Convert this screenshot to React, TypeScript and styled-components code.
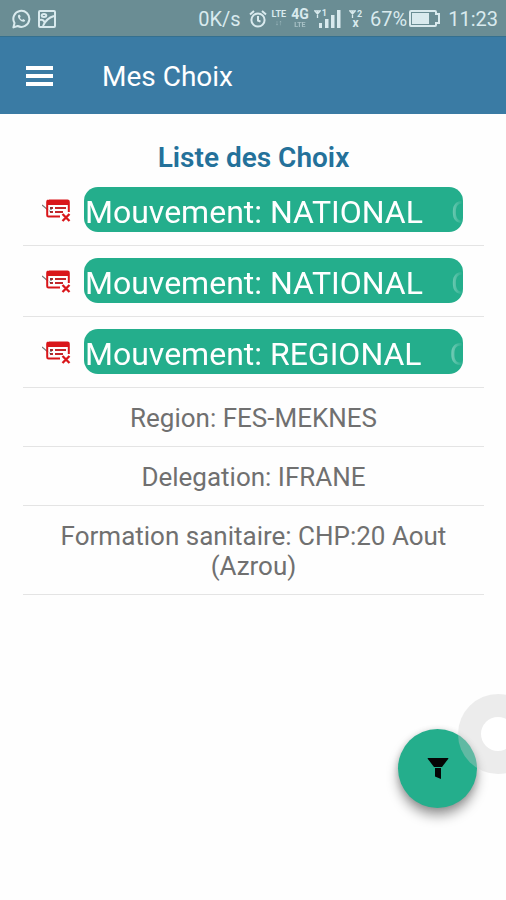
import React from "react";
import styled, { createGlobalStyle } from "styled-components";

const GlobalStyle = createGlobalStyle`
  * { box-sizing: border-box; }
  body {
    margin: 0;
    background: #fefefe;
    font-family: Roboto, "Liberation Sans", sans-serif;
  }
`;

const Screen = styled.div`
  position: relative;
  display: flex;
  flex-direction: column;
  min-height: 100vh;
  overflow: hidden;
`;

const StatusBar = styled.div`
  display: flex;
  align-items: center;
  justify-content: space-between;
  height: 36px;
  padding: 1px 8px 0 12px;
  background: #6a8d94;
  color: #d9eaee;
  font-size: 20px;
  line-height: 24px;
`;

const StatusGroup = styled.div<{ $gap: number }>`
  display: flex;
  align-items: center;
  gap: ${(p) => p.$gap}px;
`;

const Stack = styled.span`
  display: flex;
  flex-direction: column;
  align-items: center;
`;

const Tiny = styled.span<{ $size: number; $dim?: boolean }>`
  font-size: ${(p) => p.$size}px;
  line-height: ${(p) => (p.$size > 12 ? 14 : 9)}px;
  font-weight: 700;
  opacity: ${(p) => (p.$dim ? 0.55 : 1)};
`;

const AppBar = styled.header`
  display: flex;
  align-items: center;
  gap: 49px;
  height: 78px;
  padding: 0 26px;
  background: #3a7ba4;
  border-top: 1px solid #34708f;
`;

const MenuButton = styled.button`
  display: flex;
  padding: 0;
  border: 0;
  background: none;
`;

const BarTitle = styled.h1`
  margin: 0;
  padding-top: 2px;
  color: #fff;
  font-size: 28px;
  font-weight: 400;
  line-height: 36px;
`;

const Content = styled.main`
  padding: 27px 22px 0 23px;
`;

const ListTitle = styled.h2`
  margin: 0;
  color: #24719a;
  font-size: 28px;
  font-weight: 600;
  line-height: 34px;
  text-align: center;
`;

const List = styled.ul`
  margin: 0;
  padding: 0;
  list-style: none;
`;

const ChoiceRow = styled.li`
  display: flex;
  align-items: center;
  gap: 12px;
  padding: 12px 21px 13px 19px;
  border-bottom: 1px solid #e4e4e4;
`;

const DeleteButton = styled.button`
  display: flex;
  padding: 0;
  border: 0;
  background: none;
`;

const ChoiceButton = styled.button`
  display: flex;
  flex: 1;
  min-width: 0;
  height: 45px;
  align-items: center;
  padding: 4px 0 0 1px;
  overflow: hidden;
  border: 0;
  border-radius: 14px;
  background: #24ae8c;
  color: #fff;
  font-family: inherit;
  font-size: 32px;
  line-height: 40px;
`;

const Marquee = styled.span`
  display: flex;
  flex: 1;
  min-width: 0;
  gap: 28px;
  overflow: hidden;
  white-space: nowrap;
  mask-image: linear-gradient(to left, transparent, #000 32px);
`;

const DetailRow = styled.li`
  padding: 15px 36px 13px;
  border-bottom: 1px solid #e4e4e4;
  color: #707070;
  font-size: 26px;
  line-height: 30px;
  text-align: center;
`;

const FilterButton = styled.button`
  position: absolute;
  right: 29px;
  bottom: 92px;
  display: flex;
  align-items: center;
  justify-content: center;
  width: 79px;
  height: 79px;
  padding: 0;
  border: 0;
  border-radius: 50%;
  background: #24ae8c;
  box-shadow: 0 8px 12px rgba(0, 0, 0, 0.36), 0 1px 6px rgba(0, 0, 0, 0.16);
`;

const AssistBubble = styled.div`
  position: absolute;
  right: -32px;
  bottom: 126px;
  width: 80px;
  height: 80px;
  border: 23px solid rgba(205, 205, 205, 0.36);
  border-radius: 50%;
  background: #fff;
  background-clip: padding-box;
  pointer-events: none;
`;

const ChatIcon = () => (
  <svg width="19" height="20" viewBox="0 0 19 20" fill="none" stroke="#d9eaee" strokeWidth="2">
    <path d="M1.4 18.4 2.5 14A8 8 0 1 1 5.7 17z" strokeLinejoin="round" />
    <path d="M6.6 5.7c-1.3 1-.7 3 .9 4.8 1.800 2 4 2.900 5.300 1.700l.4-.9-2-1.200-1.100.8c-1.200-.6-1.700-1.200-2.200-2.200l.8-.9-.8-2z" fill="#d9eaee" stroke="none" />
  </svg>
);

const PictureIcon = () => (
  <svg width="18" height="18" viewBox="0 0 18 18" fill="none" stroke="#d9eaee" strokeWidth="2">
    <rect x="1" y="1" width="16" height="16" rx="1" />
    <ellipse cx="6" cy="5.500" rx="2.300" ry="1.500" />
    <path d="M2 10c3-.8 4 .8 4.500 2M5 16c2-5 6-8.500 11-10" />
  </svg>
);

const AlarmIcon = () => (
  <svg width="18" height="20" viewBox="0 0 18 20" fill="none" stroke="#d9eaee" strokeWidth="2">
    <circle cx="9" cy="11" r="6.600" />
    <path d="M9 7v4.500l2.500 1.200M1 5.500 5 2M17 5.500 13 2" />
  </svg>
);

const Antenna = () => (
  <svg width="7" height="8" viewBox="0 0 7 8" fill="none" stroke="#d9eaee" strokeWidth="1.3">
    <path d="M.6.8h5.800L3.500 4zM3.500 1v7" />
  </svg>
);

const SignalIcon = () => (
  <svg width="22" height="19" viewBox="0 0 22 19" fill="#d9eaee">
    <path d="M0 14h3v5H0zM6 10h3.500v9H6zM12 6h3.500v13H12zM18 1h3.500v18H18z" />
  </svg>
);

const SignalGroup = styled.span`
  display: flex;
  align-items: flex-start;
`;

const SimLabel = styled.span`
  display: flex;
  align-items: center;
  gap: 1px;
`;

const SignalOffset = styled.span`
  display: flex;
  margin-left: -8px;
`;

const BatteryIcon = () => (
  <svg width="31" height="17" viewBox="0 0 31 17" fill="none" stroke="#d9eaee" strokeWidth="2">
    <path d="M2 1h24q1 0 1 1v2h3v9h-3v2q0 1-1 1H2q-1 0-1-1V2q0-1 1-1z" />
    <path d="M3 3h17v11H3z" fill="#d9eaee" stroke="none" />
  </svg>
);

const MenuIcon = () => (
  <svg width="27" height="20" viewBox="0 0 27 20" fill="#fff">
    <path d="M0 0h27v4H0zM0 8h27v4H0zM0 16h27v4H0z" />
  </svg>
);

const RemoveCardIcon = () => (
  <svg width="30" height="24" viewBox="0 0 30 24" fill="none">
    <path d="M0 7l6 5" stroke="#777" strokeWidth="1.200" />
    <path d="M7 2.500h18.500q1.300 0 1.300 1.300V14M18 18.600H6.500q-1.300 0-1.300-1.300V3.800q0-1.300 1.300-1.300" stroke="#d9161a" strokeWidth="2" />
    <path d="M5 2h22v5H5z" fill="#d9161a" />
    <path d="M8 10h3M13 10h11M8 14h3M13 14h8" stroke="#c5262a" strokeWidth="2" />
    <path d="M9 9v3M7.500 13l2 1" stroke="#444" strokeWidth="1" />
    <path d="M20.500 16l7 7M27.500 16l-7 7" stroke="#d9161a" strokeWidth="2.300" />
  </svg>
);

const FunnelIcon = () => (
  <svg width="22" height="23" viewBox="0 0 22 23" fill="#050505">
    <path d="M.5 1.500Q.5 1 1.200 1h19.600q.7 0 .7.500L15 10H7z" />
    <path d="M8 11h6v11l-6-2.500z" />
  </svg>
);

const choices = ["Mouvement: NATIONAL", "Mouvement: NATIONAL", "Mouvement: REGIONAL"];
const details = [
  "Region: FES-MEKNES",
  "Delegation: IFRANE",
  "Formation sanitaire: CHP:20 Aout (Azrou)",
];

export default function App() {
  return (
    <Screen>
      <GlobalStyle />
      <StatusBar>
        <StatusGroup $gap={7}>
          <ChatIcon />
          <PictureIcon />
        </StatusGroup>
        <StatusGroup $gap={8}>
          <span>0K/s</span>
          <StatusGroup $gap={5}>
            <AlarmIcon />
            <Stack>
              <Tiny $size={9}>LTE</Tiny>
              <Tiny $size={7} $dim>↓↑</Tiny>
            </Stack>
            <Stack>
              <Tiny $size={14}>4G</Tiny>
              <Tiny $size={7} $dim>LTE</Tiny>
            </Stack>
            <SignalGroup>
              <SimLabel>
                <Antenna />
                <Tiny $size={9}>1</Tiny>
              </SimLabel>
              <SignalOffset>
                <SignalIcon />
              </SignalOffset>
            </SignalGroup>
          </StatusGroup>
          <Stack>
            <SimLabel>
              <Antenna />
              <Tiny $size={9}>2</Tiny>
            </SimLabel>
            <Tiny $size={12}>x</Tiny>
          </Stack>
          <StatusGroup $gap={2}>
            <span>67%</span>
            <BatteryIcon />
          </StatusGroup>
          <span>11:23</span>
        </StatusGroup>
      </StatusBar>
      <AppBar>
        <MenuButton aria-label="Menu">
          <MenuIcon />
        </MenuButton>
        <BarTitle>Mes Choix</BarTitle>
      </AppBar>
      <Content>
        <ListTitle>Liste des Choix</ListTitle>
        <List>
          {choices.map((label, i) => (
            <ChoiceRow key={i}>
              <DeleteButton aria-label="Supprimer">
                <RemoveCardIcon />
              </DeleteButton>
              <ChoiceButton>
                <Marquee>
                  <span>{label}</span>
                  <span>C</span>
                </Marquee>
              </ChoiceButton>
            </ChoiceRow>
          ))}
          {details.map((text) => (
            <DetailRow key={text}>{text}</DetailRow>
          ))}
        </List>
      </Content>
      <FilterButton aria-label="Filtrer">
        <FunnelIcon />
      </FilterButton>
      <AssistBubble />
    </Screen>
  );
}
